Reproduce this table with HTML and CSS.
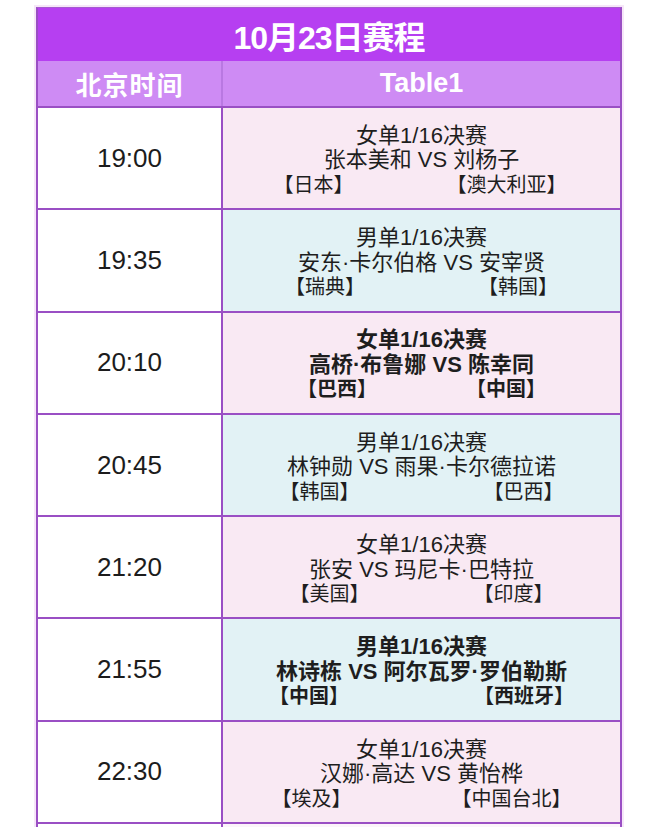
FILE: index.html
```html
<!DOCTYPE html>
<html lang="zh-CN">
<head>
<meta charset="utf-8">
<title>10月23日赛程</title>
<link rel="stylesheet" href="styles.css">
</head>
<body>
<div class="sheet">
  <div class="title">10月23日赛程</div>
  <div class="head">
    <div class="hcell">北京时间</div>
    <div class="hcell hmatch">Table1</div>
  </div>

  <div class="row r1">
    <div class="time">19:00</div>
    <div class="match pink">
      <div class="line">女单1/16决赛</div>
      <div class="line">张本美和 VS 刘杨子</div>
      <div class="line countries"><span>【日本】</span><span>【澳大利亚】</span></div>
    </div>
  </div>

  <div class="row r2">
    <div class="time">19:35</div>
    <div class="match blue">
      <div class="line">男单1/16决赛</div>
      <div class="line">安东·卡尔伯格 VS 安宰贤</div>
      <div class="line countries"><span>【瑞典】</span><span>【韩国】</span></div>
    </div>
  </div>

  <div class="row r3">
    <div class="time">20:10</div>
    <div class="match pink bold">
      <div class="line">女单1/16决赛</div>
      <div class="line">高桥·布鲁娜 VS 陈幸同</div>
      <div class="line countries"><span>【巴西】</span><span>【中国】</span></div>
    </div>
  </div>

  <div class="row r4">
    <div class="time">20:45</div>
    <div class="match blue">
      <div class="line">男单1/16决赛</div>
      <div class="line">林钟勋 VS 雨果·卡尔德拉诺</div>
      <div class="line countries"><span>【韩国】</span><span>【巴西】</span></div>
    </div>
  </div>

  <div class="row r5">
    <div class="time">21:20</div>
    <div class="match pink">
      <div class="line">女单1/16决赛</div>
      <div class="line">张安 VS 玛尼卡·巴特拉</div>
      <div class="line countries"><span>【美国】</span><span>【印度】</span></div>
    </div>
  </div>

  <div class="row r6">
    <div class="time">21:55</div>
    <div class="match blue bold">
      <div class="line">男单1/16决赛</div>
      <div class="line">林诗栋 VS 阿尔瓦罗·罗伯勒斯</div>
      <div class="line countries"><span>【中国】</span><span>【西班牙】</span></div>
    </div>
  </div>

  <div class="row r7">
    <div class="time">22:30</div>
    <div class="match pink">
      <div class="line">女单1/16决赛</div>
      <div class="line">汉娜·高达 VS 黄怡桦</div>
      <div class="line countries"><span>【埃及】</span><span>【中国台北】</span></div>
    </div>
  </div>

  <div class="row r8">
    <div class="time"></div>
    <div class="match"></div>
  </div>
</div>
</body>
</html>
```

FILE: styles.css
```css
html, body {
  margin: 0;
  padding: 0;
  background: #ffffff;
}

body {
  font-family: "Liberation Sans", "Noto Sans CJK SC", sans-serif;
  color: #1e1e1e;
  padding: 7px 0 0 36px;
  height: 827px;
  box-sizing: border-box;
  overflow: hidden;
}

.sheet {
  width: 586px;
  box-sizing: border-box;
  border-left: 2px solid #9a4fc4;
  border-right: 2px solid #9a4fc4;
  border-top: 1px solid #a55bd0;
  box-shadow: 0 0 0 2px #f6e6f8;
}

.title {
  height: 53px;
  background: #b63ff1;
  color: #ffffff;
  font-weight: bold;
  font-size: 32px;
  letter-spacing: -1px;
  display: flex;
  align-items: center;
  justify-content: center;
}

.head {
  display: grid;
  grid-template-columns: 183px 1fr;
  height: 45px;
  background: #ce8bf4;
}

.hcell {
  display: flex;
  align-items: center;
  justify-content: center;
  color: #ffffff;
  font-weight: bold;
  font-size: 26px;
}

.hcell:first-child {
  letter-spacing: 1px;
}

.hmatch {
  border-left: 2px solid #b978e2;
  font-size: 27px;
}

.row {
  display: grid;
  grid-template-columns: 183px 1fr;
  height: 102.3px;
  box-sizing: border-box;
  border-top: 2px solid #9a4fc4;
}

.row.r8 {
  height: 6px;
}

.time {
  background: #ffffff;
  display: flex;
  align-items: center;
  justify-content: center;
  font-size: 26px;
  color: #1c1c1c;
}

.match {
  border-left: 2px solid #9a4fc4;
  display: flex;
  flex-direction: column;
  align-items: center;
  justify-content: center;
  padding-top: 5px;
  box-sizing: border-box;
}

.pink {
  background: #f9e9f3;
}

.blue {
  background: #e2f2f5;
}

.r8 .match {
  background: #fcf5fa;
  padding-top: 0;
}

.line {
  font-size: 22px;
  line-height: 24.5px;
  white-space: nowrap;
}

.bold .line {
  font-weight: bold;
}

.countries {
  font-size: 20px;
  display: flex;
  justify-content: space-between;
}

.r1 .countries { width: 293px; margin-left: -3px; }
.r2 .countries { width: 273px; }
.r3 .countries { width: 249px; }
.r4 .countries { width: 284px; }
.r5 .countries { width: 264px; }
.r6 .countries { width: 305px; }
.r7 .countries { width: 300px; }
```
